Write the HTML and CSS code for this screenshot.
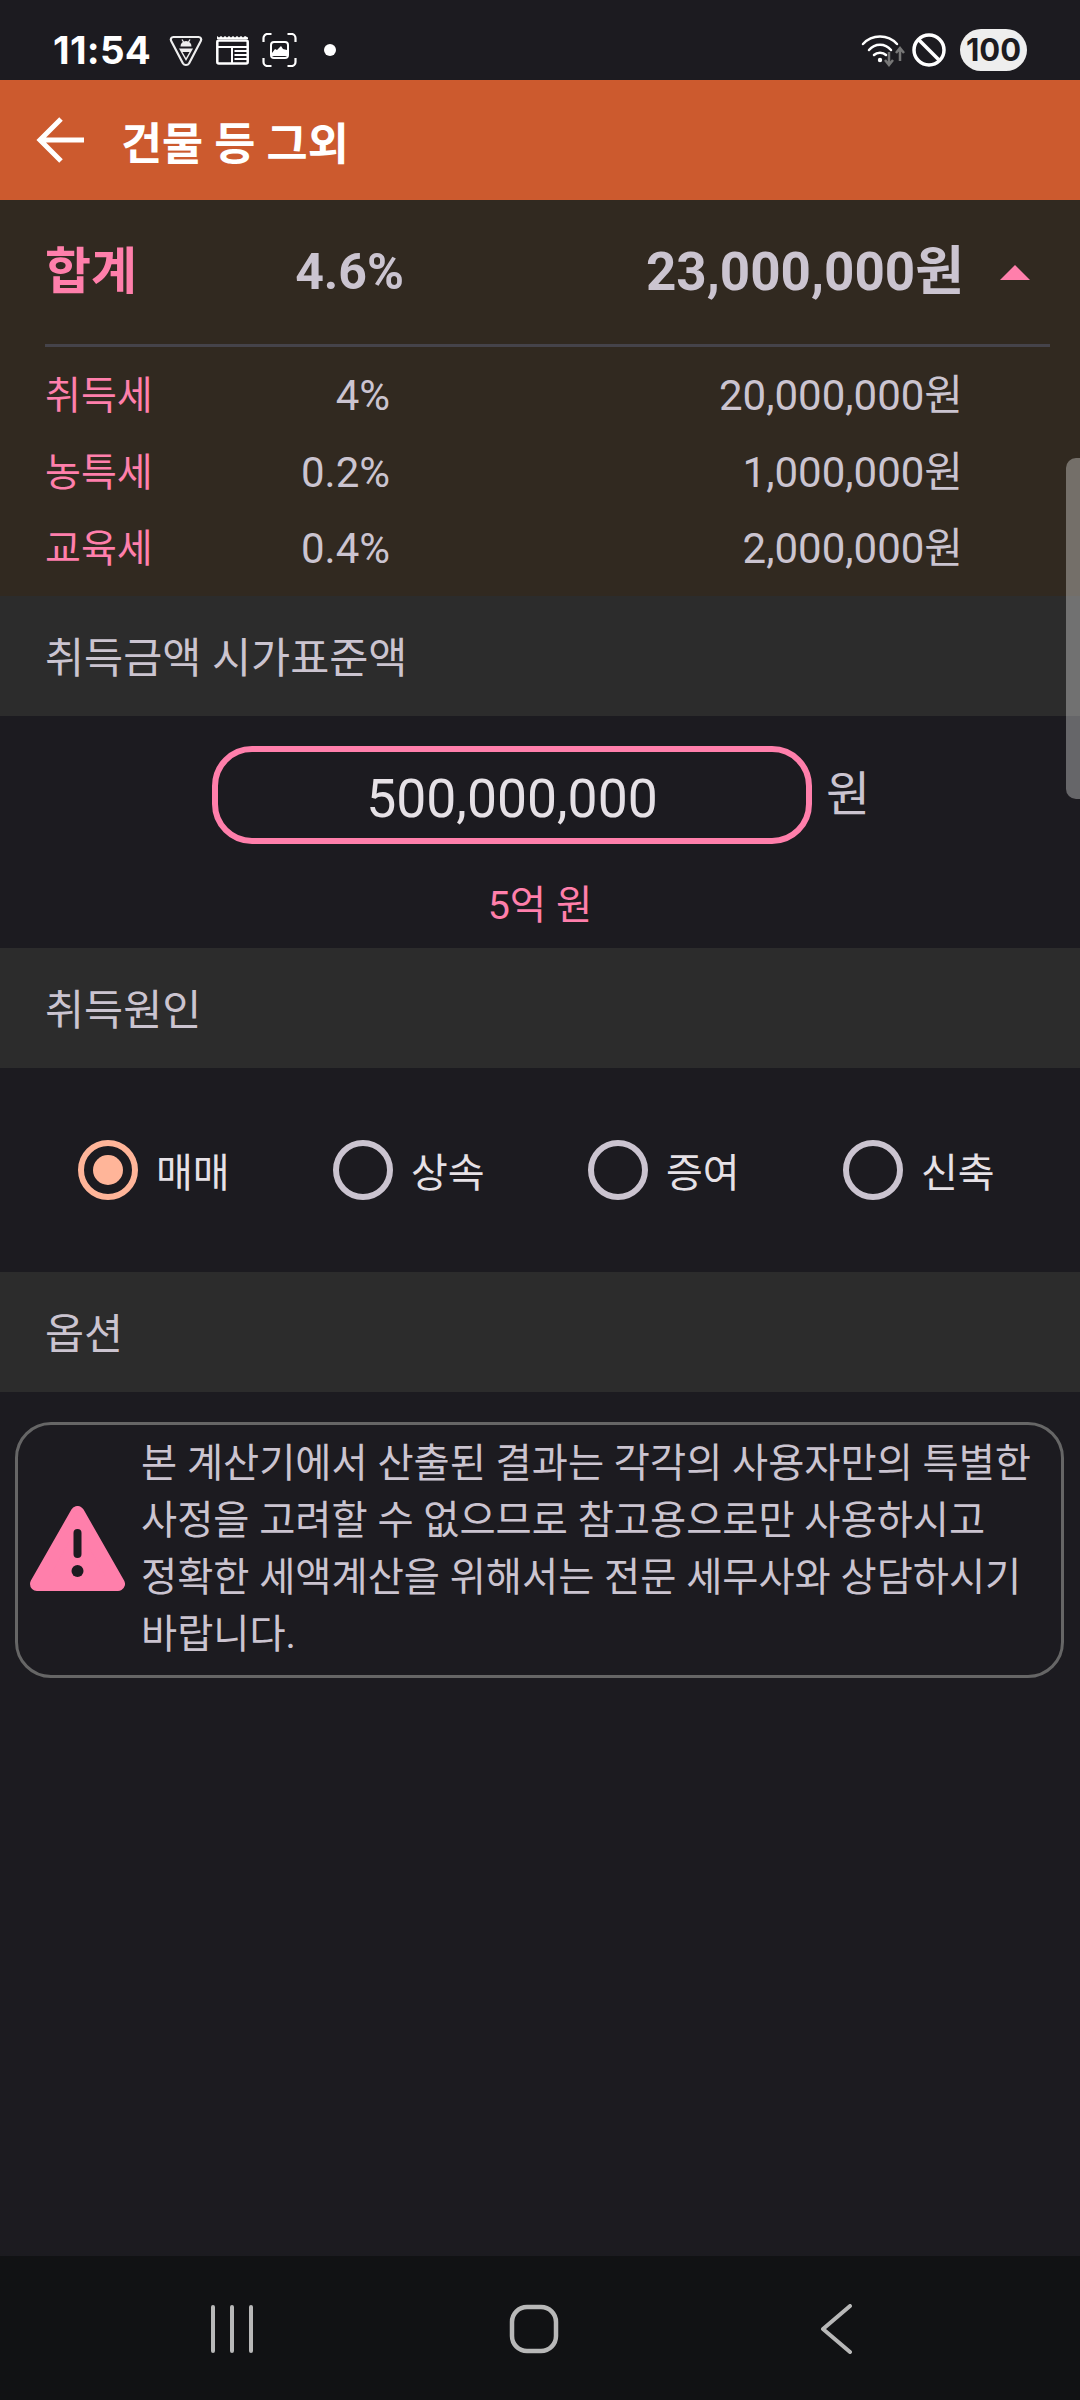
FILE: index.html
```html
<!DOCTYPE html>
<html lang="ko">
<head>
    <meta charset="UTF-8">
    <meta name="viewport" content="width=device-width, initial-scale=1.0">
    <title>건물 등 그외</title>
    <link rel="stylesheet" href="styles.css">
</head>
<body>
    <div class="screen">
        <!-- status bar -->
        <div class="statusBar">
            <span class="time">11:54</span>
            <svg class="statusIcon vpn" viewBox="0 0 34 32" fill="none">
                <path d="M4.500 2h25c2.200 0 3.400 2 2.300 4L20 28.500c-1.300 2-4.700 2-6 0L2.200 6C1.100 4 2.300 2 4.500 2z" stroke="#eee" stroke-width="2.200"/>
                <path d="M11.500 11.500a5.500 5.500 0 0 1 11 0z" fill="#eee"/>
                <path d="M10 13.500h14l-7 12.500z" fill="#eee"/>
                <path d="M13.500 17h7l-3.500 6z" fill="#1c1b20"/>
                <path d="M13 4.500l1.500 2.500M21 4.500L19.500 7" stroke="#eee" stroke-width="1.300"/>
            </svg>
            <svg class="statusIcon news" viewBox="0 0 33 30" fill="none">
                <path d="M1 4V1l2 1.500L5 1l2 1.500L9 1l2 1.500L13 1l2 1.500L17 1l2 1.500L21 1l2 1.500L25 1l2 1.500L29 1l3 1.500V4z" fill="#fff"/>
                <rect x="1.300" y="5.500" width="30.400" height="23" rx="1.500" stroke="#fff" stroke-width="2.500"/>
                <path d="M2 12h29M16 12v16M18.500 16h13M18.500 20h13M18.500 24h13" stroke="#fff" stroke-width="2"/>
            </svg>
            <svg class="statusIcon capture" viewBox="0 0 35 34" fill="none">
                <path d="M1.500 9V5a4 4 0 0 1 4-4h4M25.500 1h4a4 4 0 0 1 4 4v4M33.500 25v4a4 4 0 0 1-4 4h-4M9.500 33h-4a4 4 0 0 1-4-4v-4" stroke="#fff" stroke-width="2.200"/>
                <rect x="9" y="9" width="17" height="16" rx="3" stroke="#fff" stroke-width="2"/>
                <path d="M10 20l3-4 2 1 4-4 2 3 4 1v6H10z" fill="#fff"/>
            </svg>
            <span class="dot"></span>
            <span class="spacer"></span>
            <svg class="statusIcon wifi" viewBox="0 0 44 33" fill="none">
                <path d="M2 10C11 0 27 0 36 10M8 16C14 9 24 9 30 16M13 21c3-3 9-3 12 0" stroke="#fff" stroke-width="2.500" stroke-linecap="round"/>
                <circle cx="19" cy="26" r="2.200" fill="#fff"/>
                <path d="M28 18v12M24 26l4 5 4-5M39 27V14M35 19l4-5 4 5" stroke="#777" stroke-width="2.500"/>
            </svg>
            <svg class="statusIcon block" viewBox="0 0 34 34" fill="none">
                <circle cx="17" cy="17" r="15" stroke="#fff" stroke-width="3.500"/>
                <path d="M6.500 6.500l21 21" stroke="#fff" stroke-width="3.500"/>
            </svg>
            <span class="battery">100</span>
        </div>

        <!-- barra superior -->
        <header class="appBar">
            <svg class="backIcon" viewBox="0 0 48 46" fill="none">
                <path d="M48 23H4M25 2L4 23l21 21" stroke="#fff" stroke-width="5"/>
            </svg>
            <h1 class="appTitle">건물 등 그외</h1>
        </header>

        <!-- resumen -->
        <section class="summary">
            <div class="totalRow">
                <span class="totalLabel">합계</span>
                <span class="totalRate">4.6%</span>
                <span class="totalAmount">23,000,000원</span>
                <span class="caret"></span>
            </div>
            <div class="summaryLine"></div>
            <div class="taxRow">
                <span class="taxLabel">취득세</span>
                <span class="taxRate">4%</span>
                <span class="taxAmount">20,000,000원</span>
            </div>
            <div class="taxRow">
                <span class="taxLabel">농특세</span>
                <span class="taxRate">0.2%</span>
                <span class="taxAmount">1,000,000원</span>
            </div>
            <div class="taxRow">
                <span class="taxLabel">교육세</span>
                <span class="taxRate">0.4%</span>
                <span class="taxAmount">2,000,000원</span>
            </div>
        </section>

        <h2 class="sectionHead">취득금액 시가표준액</h2>
        <section class="priceBox">
            <div class="priceRow">
                <div class="priceInput">500,000,000</div>
                <span class="priceUnit">원</span>
            </div>
            <p class="priceHint">5억 원</p>
        </section>

        <h2 class="sectionHead">취득원인</h2>
        <section class="radioGroup">
            <div class="radioItem">
                <span class="radio checked"></span>
                <span class="radioText">매매</span>
            </div>
            <div class="radioItem">
                <span class="radio"></span>
                <span class="radioText">상속</span>
            </div>
            <div class="radioItem">
                <span class="radio"></span>
                <span class="radioText">증여</span>
            </div>
            <div class="radioItem">
                <span class="radio"></span>
                <span class="radioText">신축</span>
            </div>
        </section>

        <h2 class="sectionHead">옵션</h2>
        <div class="notice">
            <svg class="noticeIcon" viewBox="0 0 95 85">
                <path d="M47.500 7L88 78H7z" fill="#ff7fab" stroke="#ff7fab" stroke-width="14" stroke-linejoin="round"/>
                <rect x="43.500" y="23" width="8" height="29" rx="4" fill="#1c1b20"/>
                <circle cx="47.500" cy="65" r="6" fill="#1c1b20"/>
            </svg>
            <p class="noticeText">본 계산기에서 산출된 결과는 각각의 사용자만의 특별한 사정을 고려할 수 없으므로 참고용으로만 사용하시고 정확한 세액계산을 위해서는 전문 세무사와 상담하시기 바랍니다.</p>
        </div>

        <div class="filler"></div>

        <!-- barra de navegacion -->
        <nav class="navBar">
            <svg class="navIcon" viewBox="0 0 60 50" fill="none">
                <path d="M11 3v44M30 3v44M49 3v44" stroke="#b8b8b8" stroke-width="4" stroke-linecap="round"/>
            </svg>
            <svg class="navIcon" viewBox="0 0 60 50" fill="none">
                <rect x="8" y="3" width="44" height="44" rx="15" stroke="#b8b8b8" stroke-width="4.500"/>
            </svg>
            <svg class="navIcon" viewBox="0 0 60 50" fill="none">
                <path d="M44 2L17 25l27 23" stroke="#b8b8b8" stroke-width="4" stroke-linecap="round" stroke-linejoin="round"/>
            </svg>
        </nav>

        <!-- scrollbar flotante -->
        <div class="scrollThumb"></div>
    </div>
</body>
</html>
```

FILE: styles.css
```css
/* variables */
:root{
    --bg: #1c1b20;
    --pink: #ff7fab;
    --text: #cbc4d0;
    --textLight: #e6e1e6;
    --headBg: #2c2c2c;
}
*{
    box-sizing: border-box;
    margin: 0;
    padding: 0;
}
body{
    background-color: var(--bg);
    font-family: Roboto, "Noto Sans CJK KR", sans-serif;
}
.screen{
    position: relative;
    width: 1080px;
    height: 2400px;
    display: flex;
    flex-direction: column;
    overflow: hidden;
    background-color: var(--bg);
}

/* status bar */
.statusBar{
    height: 80px;
    padding: 20px 53px 0;
    display: flex;
    align-items: center;
    color: #fff;
}
.time{
    width: 116px;
    font-size: 38.500px;
    font-weight: 700;
    font-family: Inter, Roboto, sans-serif;
    letter-spacing: .3px;
    white-space: nowrap;
}
.statusIcon{
    flex: none;
    display: block;
}
.vpn{ width: 34px; height: 32px; margin-top: 2px; }
.news{ width: 33px; height: 30px; margin-left: 13px; }
.capture{ width: 35px; height: 34px; margin-left: 13px; }
.dot{
    width: 12px;
    height: 12px;
    margin-left: 27px;
    border-radius: 50%;
    background-color: #fff;
}
.spacer{ flex: 1; }
.wifi{ width: 44px; height: 33px; }
.block{ width: 34px; height: 34px; margin-left: 7px; }
.battery{
    width: 67px;
    height: 42px;
    margin-left: 14px;
    border-radius: 21px;
    background-color: #eee;
    color: #1c1b20;
    font-family: Inter, Roboto, sans-serif;
    font-size: 31px;
    font-weight: 700;
    line-height: 42px;
    text-align: center;
}

/* barra superior */
.appBar{
    height: 120px;
    padding-left: 36px;
    display: flex;
    align-items: center;
    background-color: #cc5a2e;
}
.backIcon{
    width: 48px;
    height: 46px;
}
.appTitle{
    margin-left: 37px;
    color: #fff;
    font-size: 44.700px;
    font-weight: 700;
}

/* resumen */
.summary{
    height: 396px;
    padding: 0 30px 0 45px;
    background-color: #312920;
    color: var(--text);
}
.totalRow{
    height: 144px;
    display: grid;
    grid-template-columns: 359px 560px 36px 30px;
    align-items: center;
    font-size: 50px;
    font-weight: 700;
    line-height: 66px;
}
.totalRow > span{
    grid-row: 1;
}
.totalLabel{
    grid-column: 1;
    color: var(--pink);
}
.totalRate{
    grid-column: 1;
    text-align: right;
}
.totalAmount{
    grid-column: 2;
    font-size: 53px;
    text-align: right;
}
.caret{
    grid-column: 4;
    width: 0;
    height: 0;
    border-left: 15px solid transparent;
    border-right: 15px solid transparent;
    border-bottom: 15px solid var(--pink);
}
.summaryLine{
    height: 3px;
    background-color: #45434a;
}
.taxRow{
    height: 76.5px;
    display: grid;
    grid-template-columns: 345px 573px;
    align-items: center;
    font-size: 42px;
    line-height: 56px;
}
.taxRow:nth-child(3){
    margin-top: 11px;
}
.taxRow > span{
    grid-row: 1;
}
.taxLabel{
    grid-column: 1;
    color: var(--pink);
    font-size: 39px;
}
.taxRate{
    grid-column: 1;
    text-align: right;
}
.taxAmount{
    grid-column: 2;
    text-align: right;
}

/* titulos de seccion */
.sectionHead{
    height: 120px;
    padding: 0 0 4px 45px;
    display: flex;
    align-items: center;
    background-color: var(--headBg);
    color: var(--text);
    font-size: 42.500px;
    font-weight: 400;
}

/* precio */
.priceBox{
    height: 232px;
    padding-top: 30px;
}
.priceRow{
    padding-left: 212px;
    display: flex;
    align-items: center;
    gap: 14px;
}
.priceInput{
    width: 600px;
    height: 98px;
    border: 6px solid var(--pink);
    border-radius: 40px;
    color: var(--textLight);
    font-size: 53.500px;
    line-height: 94px;
    text-align: center;
}
.priceUnit{
    color: var(--text);
    font-size: 48px;
    line-height: 60px;
}
.priceHint{
    margin-top: 29px;
    color: var(--pink);
    font-size: 39.500px;
    text-align: center;
}

/* radios */
.radioGroup{
    height: 204px;
    padding-left: 78px;
    display: grid;
    grid-template-columns: repeat(4, 255px);
    align-items: center;
}
.radioItem{
    display: flex;
    align-items: center;
    gap: 18px;
    color: var(--textLight);
    font-size: 40px;
}
.radio{
    width: 60px;
    height: 60px;
    border: 6px solid var(--text);
    border-radius: 50%;
    display: flex;
    align-items: center;
    justify-content: center;
}
.radio.checked{
    border-color: #ffb599;
}
.radio.checked::after{
    content: "";
    width: 30px;
    height: 30px;
    border-radius: 50%;
    background-color: #ffb599;
}

/* aviso */
.notice{
    width: 1049px;
    height: 256px;
    margin: 30px 0 0 15px;
    padding-left: 12px;
    border: 3px solid #666;
    border-radius: 36px;
    display: flex;
    align-items: center;
}
.noticeIcon{
    flex: none;
    width: 95px;
    height: 85px;
    margin-top: -3px;
}
.noticeText{
    width: 910px;
    margin-left: 16px;
    color: var(--text);
    font-size: 39.300px;
    line-height: 57px;
    word-break: keep-all;
}

.filler{
    flex: 1;
}

/* barra de navegacion */
.navBar{
    height: 144px;
    padding: 2px 214px 0 202px;
    display: flex;
    align-items: center;
    justify-content: space-between;
    background-color: #111214;
}
.navIcon{
    width: 60px;
    height: 50px;
}

/* scrollbar flotante */
.scrollThumb{
    position: absolute;
    top: 458px;
    right: 0;
    width: 14px;
    height: 341px;
    border-radius: 10px 0 0 10px;
    background-color: rgba(255, 255, 255, .33);
}
```
